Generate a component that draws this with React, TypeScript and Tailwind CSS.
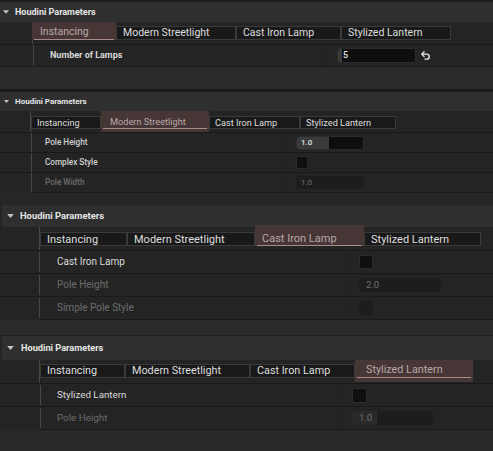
import React from "react";
import { Undo2 } from "lucide-react";

type TabDef = { label: string; w: string };

function Tri({ cls }: { cls: string }) {
  return (
    <svg viewBox="0 0 10 6" className={cls}>
      <path d="M0 0H10L5 6Z" fill="#c4c4c4" />
    </svg>
  );
}

function Tabs({
  tabs,
  sel,
  h,
  text,
  pad,
  selPad,
  selWrap,
}: {
  tabs: TabDef[];
  sel: number;
  h: string;
  text: string;
  pad: string;
  selPad: string;
  selWrap: string;
}) {
  return (
    <div className="flex items-start">
      {tabs.map((t, i) =>
        i === sel ? (
          <div key={t.label} className={`${t.w} ${selWrap} bg-[#473636] shrink-0 flex flex-col`}>
            <div
              className={`${h} ${text} ${selPad} mx-[2px] border-b border-[#a88a8a] text-[#b7a7a7] flex items-center leading-none whitespace-nowrap`}
            >
              {t.label}
            </div>
          </div>
        ) : (
          <div
            key={t.label}
            className={`${t.w} ${h} ${text} ${pad} bg-[#191919] border border-[#3a3a3a] text-[#dedede] flex items-center leading-none whitespace-nowrap shrink-0`}
          >
            {t.label}
          </div>
        )
      )}
    </div>
  );
}

function NumInput({
  w,
  h,
  text,
  pad,
  value,
  fill,
  disabled,
}: {
  w: string;
  h: string;
  text: string;
  pad: string;
  value: string;
  fill: string;
  disabled?: boolean;
}) {
  return (
    <div
      className={`${w} ${h} rounded-[3px] relative overflow-hidden flex items-center shrink-0 ${
        disabled ? "bg-[#1d1d1d] text-[#6f6f6f]" : "bg-[#0e0e0e] text-[#e2e2e2] border border-[#2b2b2b]"
      }`}
    >
      <div className={`absolute left-0 top-0 bottom-0 ${fill}`} />
      <span className={`relative leading-none ${text} ${pad}`}>{value}</span>
    </div>
  );
}

function Check({ size, disabled }: { size: string; disabled?: boolean }) {
  return (
    <div
      className={`${size} rounded-[2px] shrink-0 ${
        disabled ? "bg-[#1d1d1d]" : "bg-[#0f0f0f] border border-[#2c2c2c]"
      }`}
    />
  );
}

const Sep = ({ cls = "" }: { cls?: string }) => <div className={`h-px bg-[#1a1a1a] shrink-0 ${cls}`} />;

export default function App() {
  return (
    <div className="w-[493px] h-[451px] overflow-hidden bg-[#262626] flex flex-col font-['Roboto','Liberation_Sans',sans-serif]">
      {/* ===== Panel 1 ===== */}
      <div className="h-[2px] bg-[#1d1d1d] shrink-0" />
      <div className="h-[20px] bg-[#2f2f2f] flex items-center shrink-0">
        <Tri cls="ml-[3px] w-[6px] h-[4px]" />
        <span className="ml-[6px] text-[9px] font-bold text-[#e4e4e4] leading-none">Houdini Parameters</span>
      </div>
      <div className="h-[22px] bg-[#242424] flex shrink-0">
        <div className="w-[32px] shrink-0" />
        <div className="w-px bg-[#474747] shrink-0" />
        <div className="pt-[4px]">
          <Tabs
            tabs={[
              { label: "Instancing", w: "w-[84px]" },
              { label: "Modern Streetlight", w: "w-[120px]" },
              { label: "Cast Iron Lamp", w: "w-[105px]" },
              { label: "Stylized Lantern", w: "w-[110px]" },
            ]}
            sel={0}
            h="h-[14px]"
            text="text-[10.5px]"
            pad="pl-[6px]"
            selPad="pl-[6px]"
            selWrap="-mt-[4px] pt-[4px] -ml-[1px]"
          />
        </div>
      </div>
      <Sep />
      <div className="h-[21px] bg-[#242424] flex items-center shrink-0">
        <div className="w-[33px] shrink-0" />
        <div className="w-px self-stretch bg-[#474747] shrink-0" />
        <div className="w-[291px] pl-[16px] text-[9px] font-bold text-[#d8d8d8] leading-none shrink-0">Number of Lamps</div>
        <div className="w-px self-stretch bg-[#202020] shrink-0" />
        <div className="pl-[11px] flex items-center">
          <NumInput w="w-[79px]" h="h-[15px]" text="text-[9px] font-medium" pad="pl-[5px]" value="5" fill="w-[4px] bg-[#3a3a3a]" />
          <Undo2 className="ml-[4px] w-[11px] h-[11px] text-[#e8e8e8]" strokeWidth={3} />
        </div>
      </div>
      <Sep />
      <div className="h-[22px] bg-[#2b2b2b] shrink-0" />

      {/* ===== Panel 2 ===== */}
      <div className="h-[3px] bg-[#1d1d1d] shrink-0" />
      <div className="h-[19px] bg-[#2f2f2f] flex items-center shrink-0">
        <Tri cls="ml-[4px] w-[5px] h-[3px]" />
        <span className="ml-[6px] text-[8px] font-bold text-[#e4e4e4] leading-none">Houdini Parameters</span>
      </div>
      <div className="h-[21px] bg-[#242424] flex shrink-0">
        <div className="w-[30px] shrink-0" />
        <div className="w-px bg-[#474747] shrink-0" />
        <div className="pt-[5px]">
          <Tabs
            tabs={[
              { label: "Instancing", w: "w-[70px]" },
              { label: "Modern Streetlight", w: "w-[108px]" },
              { label: "Cast Iron Lamp", w: "w-[91px]" },
              { label: "Stylized Lantern", w: "w-[96px]" },
            ]}
            sel={1}
            h="h-[13px]"
            text="text-[9.2px]"
            pad="pl-[5px]"
            selPad="pl-[7px]"
            selWrap="-mt-[5px] pt-[5px] pb-[3px]"
          />
        </div>
      </div>
      <Sep />
      {[
        { label: "Pole Height", kind: "input" },
        { label: "Complex Style", kind: "check" },
        { label: "Pole Width", kind: "dinput" },
      ].map((r, i) => (
        <React.Fragment key={r.label}>
          <div className="h-[19px] bg-[#242424] flex items-center shrink-0">
            <div className="w-[31px] shrink-0" />
            <div className="w-px self-stretch bg-[#474747] shrink-0" />
            <div
              className={`w-[253px] pl-[13px] text-[8.2px] font-medium leading-none shrink-0 ${
                r.kind === "dinput" ? "text-[#6c6c6c]" : "text-[#d0d0d0]"
              }`}
            >
              {r.label}
            </div>
            <div className="w-px self-stretch bg-[#202020] shrink-0" />
            <div className="pl-[10px] flex items-center">
              {r.kind === "input" && (
                <NumInput w="w-[68px]" h="h-[14px]" text="text-[8px] font-medium" pad="pl-[4px]" value="1.0" fill="w-[32px] bg-[#3a3a3a]" />
              )}
              {r.kind === "check" && <Check size="w-[12px] h-[13px]" />}
              {r.kind === "dinput" && (
                <NumInput w="w-[68px]" h="h-[13px]" text="text-[8px]" pad="pl-[5px]" value="1.0" fill="w-0" disabled />
              )}
            </div>
          </div>
          {i < 2 ? <Sep /> : <Sep cls="ml-[31px]" />}
        </React.Fragment>
      ))}
      <div className="h-[12px] bg-[#262626] shrink-0" />

      {/* ===== Panel 3 ===== */}
      <div className="h-[22px] ml-[2px] bg-[#2f2f2f] flex items-center shrink-0">
        <Tri cls="ml-[5px] w-[7px] h-[4px]" />
        <span className="ml-[6px] text-[9.4px] font-bold text-[#e4e4e4] leading-none">Houdini Parameters</span>
      </div>
      <div className="h-[23px] bg-[#242424] flex shrink-0">
        <div className="w-[39px] shrink-0" />
        <div className="w-px bg-[#474747] shrink-0" />
        <div className="pt-[5px]">
          <Tabs
            tabs={[
              { label: "Instancing", w: "w-[87px]" },
              { label: "Modern Streetlight", w: "w-[128px]" },
              { label: "Cast Iron Lamp", w: "w-[109px]" },
              { label: "Stylized Lantern", w: "w-[117px]" },
            ]}
            sel={2}
            h="h-[14px]"
            text="text-[11px]"
            pad="pl-[6px]"
            selPad="pl-[5px]"
            selWrap="-mt-[7px] pt-[7px]"
          />
        </div>
      </div>
      <Sep />
      {[
        { label: "Cast Iron Lamp", kind: "check" },
        { label: "Pole Height", kind: "dinput" },
        { label: "Simple Pole Style", kind: "dcheck" },
      ].map((r, i) => (
        <React.Fragment key={r.label}>
          <div className="h-[22px] bg-[#242424] flex items-center shrink-0">
            <div className="w-[39px] shrink-0" />
            <div className="w-px self-stretch my-[1px] bg-[#474747] shrink-0" />
            <div
              className={`w-[307px] pl-[17px] text-[10px] leading-none shrink-0 ${
                r.kind === "check" ? "text-[#dadada]" : "text-[#6c6c6c]"
              }`}
            >
              {r.label}
            </div>
            <div className="w-px self-stretch bg-[#202020] shrink-0" />
            <div className="pl-[11px] flex items-center">
              {r.kind === "check" && <Check size="w-[14px] h-[14px]" />}
              {r.kind === "dinput" && (
                <NumInput w="w-[82px]" h="h-[14px]" text="text-[9.5px]" pad="pl-[7px]" value="2.0" fill="w-0" disabled />
              )}
              {r.kind === "dcheck" && <Check size="w-[14px] h-[14px]" disabled />}
            </div>
          </div>
          {i < 2 ? <Sep /> : <Sep cls="ml-[39px]" />}
        </React.Fragment>
      ))}
      <div className="h-[15px] bg-[#2b2b2b] shrink-0" />
      <div className="h-px bg-[#1d1d1d] shrink-0" />

      {/* ===== Panel 4 ===== */}
      <div className="h-[24px] ml-[2px] bg-[#2f2f2f] flex items-center shrink-0">
        <Tri cls="ml-[5px] w-[7px] h-[4px]" />
        <span className="ml-[7px] text-[9.2px] font-bold text-[#e4e4e4] leading-none">Houdini Parameters</span>
      </div>
      <div className="h-[23px] bg-[#242424] flex shrink-0">
        <div className="w-[39px] shrink-0" />
        <div className="w-px bg-[#474747] shrink-0" />
        <div className="pt-[4px]">
          <Tabs
            tabs={[
              { label: "Instancing", w: "w-[85px]" },
              { label: "Modern Streetlight", w: "w-[125px]" },
              { label: "Cast Iron Lamp", w: "w-[105px]" },
              { label: "Stylized Lantern", w: "w-[118px]" },
            ]}
            sel={3}
            h="h-[14px]"
            text="text-[10.8px]"
            pad="pl-[6px]"
            selPad="pl-[9px]"
            selWrap="-mt-[4px] pt-[4px] pb-[4px]"
          />
        </div>
      </div>
      <Sep />
      {[
        { label: "Stylized Lantern", kind: "check" },
        { label: "Pole Height", kind: "dinput" },
      ].map((r, i) => (
        <React.Fragment key={r.label}>
          <div className="h-[22px] bg-[#242424] flex items-center shrink-0">
            <div className="w-[40px] shrink-0" />
            <div className="w-px self-stretch my-[1px] bg-[#474747] shrink-0" />
            <div
              className={`w-[298px] pl-[16px] text-[9.8px] leading-none shrink-0 ${
                r.kind === "check" ? "text-[#dadada]" : "text-[#6c6c6c]"
              }`}
            >
              {r.label}
            </div>
            <div className="w-px self-stretch bg-[#202020] shrink-0" />
            <div className="pl-[12px] flex items-center">
              {r.kind === "check" && <Check size="w-[15px] h-[15px]" />}
              {r.kind === "dinput" && (
                <NumInput w="w-[81px]" h="h-[14px]" text="text-[9.5px]" pad="pl-[7px]" value="1.0" fill="w-[25px] bg-[#2a2a2a]" disabled />
              )}
            </div>
          </div>
          {i < 1 ? <Sep /> : <Sep cls="ml-[40px]" />}
        </React.Fragment>
      ))}
      <div className="flex-1 bg-[#282828]" />
    </div>
  );
}
